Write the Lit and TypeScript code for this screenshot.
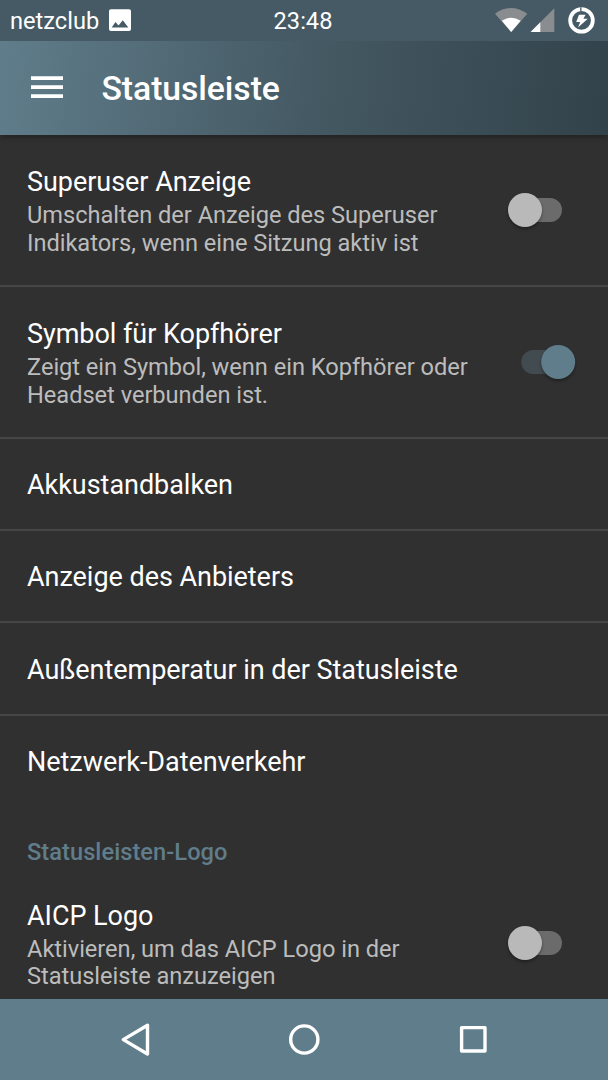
import { LitElement, html, css, nothing } from "lit";
import { customElement, property } from "lit/decorators.js";

@customElement("toggle-switch")
class ToggleSwitch extends LitElement {
  @property({ type: Boolean, reflect: true }) on = false;

  static styles = css`
    :host { display: block; width: 68px; height: 40px; flex: none; }
    svg { display: block; overflow: visible; }
    .thumb { filter: drop-shadow(0 2px 1.5px rgba(0, 0, 0, 0.35)); }
  `;

  render() {
    return html`<svg width="68" height="40" viewBox="0 0 68 40">
      <rect x="13.3" y="8" width="40.7" height="24" rx="12" fill=${this.on ? "#424b50" : "#6b6b6b"} />
      <circle class="thumb" cx=${this.on ? 50.2 : 17} cy="20" r="17" fill=${this.on ? "#5f7d8b" : "#b9b9b9"} />
    </svg>`;
  }
}

@customElement("pref-row")
class PrefRow extends LitElement {
  @property() label = "";
  @property({ attribute: false }) lines: string[] = [];
  @property() toggle: "" | "on" | "off" = "";

  static styles = css`
    :host {
      display: flex;
      align-items: center;
      justify-content: space-between;
      box-sizing: border-box;
      flex: none;
      height: 92.3px;
      padding: 0 32px 0 27px;
      border-bottom: 2px solid #464646;
    }
    :host([toggle]) { height: 151.9px; }
    :host([last]) { border-bottom-color: transparent; }
    .text { padding-top: 2.4px; }
    :host([toggle]) .text { padding-top: 4.4px; }
    .title { font-size: 27px; line-height: 32px; letter-spacing: -0.04px; color: #fff; white-space: nowrap; }
    .summary { margin-top: 4px; font-size: 23.64px; line-height: 27.7px; letter-spacing: -0.03px; color: #bcbcbc; white-space: nowrap; }
  `;

  render() {
    return html`
      <div class="text">
        <div class="title">${this.label}</div>
        ${this.lines.length
          ? html`<div class="summary">${this.lines.map((l) => html`<div>${l}</div>`)}</div>`
          : nothing}
      </div>
      ${this.toggle ? html`<toggle-switch ?on=${this.toggle === "on"}></toggle-switch>` : nothing}
    `;
  }
}

@customElement("app-root")
class AppRoot extends LitElement {
  static styles = css`
    :host {
      display: flex;
      flex-direction: column;
      width: 608px;
      height: 1080px;
      overflow: hidden;
      background: #303030;
      color: #fff;
      font-family: Roboto, "Liberation Sans", sans-serif;
    }
    svg { display: block; }
    .status {
      flex: none;
      display: grid;
      grid-template-columns: 1fr auto 1fr;
      align-items: center;
      height: 40.5px;
      padding: 0 12px 0 10px;
      background: #455a64;
      font-size: 23.64px;
      line-height: 28px;
    }
    .status span { padding-top: 2px; }
    .left { display: flex; align-items: center; gap: 10px; }
    .right { display: flex; align-items: center; justify-content: flex-end; }
    .toolbar {
      flex: none;
      display: flex;
      align-items: center;
      gap: 38.5px;
      height: 94.5px;
      box-sizing: border-box;
      padding-left: 31px;
      background: linear-gradient(97deg, #607d8b 0%, #455a64 50%, #32424a 100%);
      box-shadow: 0 4px 4px -1px rgba(0, 0, 0, 0.25);
      z-index: 1;
    }
    .heading { margin: 2.6px 0 0; font-size: 33.78px; line-height: 40px; font-weight: 500; letter-spacing: -0.08px; }
    .list { flex: 1; min-height: 0; display: flex; flex-direction: column; overflow: hidden; }
    .category {
      flex: none;
      height: 60.3px;
      box-sizing: border-box;
      padding: 29.6px 27px 0;
      font-size: 23.64px;
      line-height: 28px;
      letter-spacing: 0.05px;
      font-weight: 500;
      color: #607d8b;
    }
    .nav { flex: none; height: 81px; background: #607d8b; }
  `;

  render() {
    return html`
      <header class="status">
        <div class="left">
          <span>netzclub</span>
          <svg width="22" height="22" viewBox="0 0 22 22">
            <path fill="#fff" fill-rule="evenodd" d="M2 .2h18a2 2 0 0 1 2 2V20a2 2 0 0 1-2 2H2a2 2 0 0 1-2-2V2.2a2 2 0 0 1 2-2ZM2.7 18.4h16.6L13.8 11.2l-4.3 5.4-3-3.6Z" />
          </svg>
        </div>
        <span>23:48</span>
        <div class="right">
          <svg width="101" height="40" viewBox="495 0 101 40">
            <path fill="#8a8d90" d="M495 13.7Q511 2.5 527.3 13.7L511.2 32Z" />
            <path fill="#fff" d="M501.8 20.8Q511 14.5 520.7 20.8L511.2 32Z" />
            <path fill="#8a8d90" d="M554.3 8.2V32H530.6Z" />
            <path fill="#fff" d="M540.3 22.3V32H530.6Z" />
            <circle cx="581.5" cy="20.4" r="11.3" fill="none" stroke="#fff" stroke-width="3.8" />
            <path d="M580.8 7.3V11" stroke="#69777e" stroke-width="1.6" />
            <path fill="#fff" d="M579 14.8h6.6l-2.2 4h4.4l-9.8 8.8 2.2-5.6h-4Z" />
          </svg>
        </div>
      </header>
      <div class="toolbar">
        <svg width="32" height="24" viewBox="0 0 32 24">
          <path fill="#fff" d="M0 .2h32v3.8H0zM0 9.2h32v3.8H0zM0 18.2h32v3.8H0z" />
        </svg>
        <h1 class="heading">Statusleiste</h1>
      </div>
      <main class="list">
        <pref-row label="Superuser Anzeige" toggle="off"
          .lines=${["Umschalten der Anzeige des Superuser", "Indikators, wenn eine Sitzung aktiv ist"]}></pref-row>
        <pref-row label="Symbol für Kopfhörer" toggle="on"
          .lines=${["Zeigt ein Symbol, wenn ein Kopfhörer oder", "Headset verbunden ist."]}></pref-row>
        <pref-row label="Akkustandbalken"></pref-row>
        <pref-row label="Anzeige des Anbieters"></pref-row>
        <pref-row label="Außentemperatur in der Statusleiste"></pref-row>
        <pref-row label="Netzwerk-Datenverkehr" last></pref-row>
        <div class="category">Statusleisten-Logo</div>
        <pref-row label="AICP Logo" toggle="off"
          .lines=${["Aktivieren, um das AICP Logo in der", "Statusleiste anzuzeigen"]}></pref-row>
      </main>
      <nav class="nav">
        <svg width="608" height="81" viewBox="0 999 608 81" fill="none" stroke="#fff" stroke-width="3.4" stroke-linejoin="round">
          <path d="M147.5 1025.2V1054L123.3 1039.6Z" />
          <circle cx="304.3" cy="1039.5" r="13.6" />
          <rect x="461.6" y="1027.6" width="23.4" height="23.4" />
        </svg>
      </nav>
    `;
  }
}
